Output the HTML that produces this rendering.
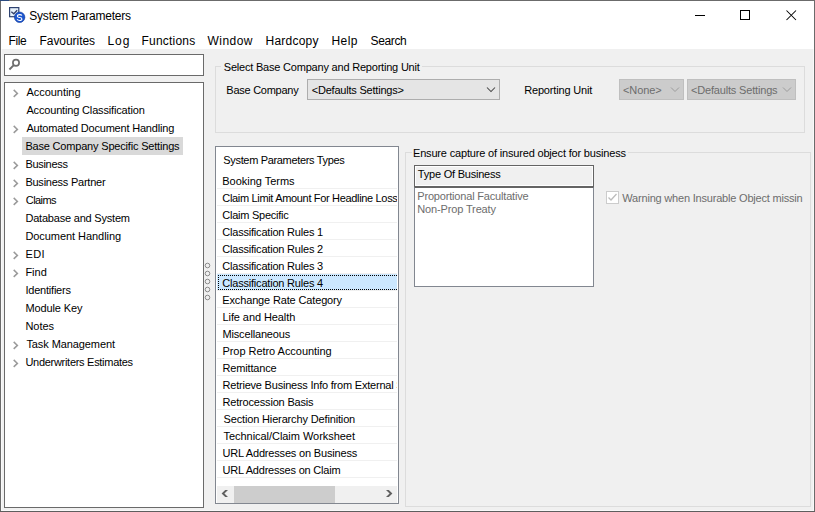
<!DOCTYPE html>
<html><head><meta charset="utf-8"><style>
html,body{margin:0;padding:0}
body{width:815px;height:512px;overflow:hidden;position:relative;background:#f0f0f0;font-family:"Liberation Sans",sans-serif}
.t{position:absolute;white-space:nowrap}
</style></head><body>
<div style="position:absolute;left:0px;top:0px;width:815px;height:49px;background:#fff"></div>
<div style="position:absolute;left:0px;top:0px;width:815px;height:1px;background:#6b6b6b"></div>
<div style="position:absolute;left:0px;top:0px;width:1px;height:512px;background:#6b6b6b"></div>
<div style="position:absolute;left:814px;top:0px;width:1px;height:512px;background:#6b6b6b"></div>
<div style="position:absolute;left:1px;top:49px;width:1px;height:462px;background:#f9f9f9"></div>
<div style="position:absolute;left:813px;top:49px;width:1px;height:462px;background:#f9f9f9"></div>
<div style="position:absolute;left:1px;top:510px;width:813px;height:1px;background:#f9f9f9"></div>
<div style="position:absolute;left:0px;top:511px;width:815px;height:1px;background:#5e5e5e"></div>
<div style="position:absolute;left:0px;top:0px;width:9px;height:1px;background:#2a4a80"></div>
<svg style="position:absolute;left:8px;top:6px" width="20" height="18" viewBox="0 0 20 18">
<rect x="1.6" y="1.6" width="9.2" height="9.1" fill="#e8f2fb" stroke="#2e4270" stroke-width="1.2"/>
<path d="M3.3 5.7 L5.8 7.8 L9.2 4.2" fill="none" stroke="#34406a" stroke-width="1.3"/>
<circle cx="11.65" cy="11.25" r="5.2" fill="#1b55cf" stroke="#183f99" stroke-width="0.7"/>
<path d="M14 9.5 C13.5 8.8 12.6 8.6 11.6 8.6 C10.4 8.6 9.4 9.2 9.4 10.2 C9.4 11.3 10.5 11.4 11.6 11.5 C12.8 11.6 13.9 11.9 13.9 12.9 C13.9 13.9 12.8 14.4 11.6 14.4 C10.5 14.4 9.6 14.1 9.1 13.3" fill="none" stroke="#fff" stroke-width="1.05"/>
</svg>
<div class="t" style="left:29.3px;top:8.84px;font-size:12px;line-height:14px;color:#000;letter-spacing:-0.225px;">System Parameters</div>
<div style="position:absolute;left:695px;top:15px;width:10px;height:1px;background:#000"></div>
<div style="position:absolute;left:740px;top:10px;width:10px;height:10px;border:1px solid #000;box-sizing:border-box"></div>
<svg style="position:absolute;left:786px;top:10px" width="11" height="11" viewBox="0 0 11 11">
<path d="M0.5 0.5 L10 10 M10 0.5 L0.5 10" stroke="#000" stroke-width="1.05"/></svg>
<div class="t" style="left:8.5px;top:33.84px;font-size:12px;line-height:14px;color:#000;letter-spacing:-0.35px;">File</div>
<div class="t" style="left:39.5px;top:33.84px;font-size:12px;line-height:14px;color:#000;letter-spacing:-0.05px;">Favourites</div>
<div class="t" style="left:107.5px;top:33.84px;font-size:12px;line-height:14px;color:#000;letter-spacing:0.95px;">Log</div>
<div class="t" style="left:141.5px;top:33.84px;font-size:12px;line-height:14px;color:#000;letter-spacing:0.2px;">Functions</div>
<div class="t" style="left:207.5px;top:33.84px;font-size:12px;line-height:14px;color:#000;letter-spacing:0.45px;">Window</div>
<div class="t" style="left:265.5px;top:33.84px;font-size:12px;line-height:14px;color:#000;letter-spacing:0.23px;">Hardcopy</div>
<div class="t" style="left:331.5px;top:33.84px;font-size:12px;line-height:14px;color:#000;letter-spacing:0.45px;">Help</div>
<div class="t" style="left:370.5px;top:33.84px;font-size:12px;line-height:14px;color:#000;letter-spacing:-0.35px;">Search</div>
<div style="position:absolute;left:4px;top:54px;width:200px;height:22px;background:#fff;border:1px solid #6a6a6a;box-sizing:border-box"></div>
<svg style="position:absolute;left:7px;top:57px" width="14" height="14" viewBox="0 0 14 14">
<circle cx="9" cy="5.8" r="3.1" fill="none" stroke="#6d6d6d" stroke-width="1.7"/>
<path d="M6.8 8.1 L2.4 12.5" stroke="#6d6d6d" stroke-width="1.9"/></svg>
<div style="position:absolute;left:4px;top:82px;width:200px;height:426px;background:#fff;border:1px solid #6a6a6a;box-sizing:border-box"></div>
<div style="position:absolute;left:22px;top:137px;width:161px;height:18px;background:#d9d9d9"></div>
<div class="t" style="left:26.4px;top:85.69px;font-size:11px;line-height:13px;color:#000;letter-spacing:-0.033px;">Accounting</div>
<svg style="position:absolute;left:12px;top:88px" width="8" height="11" viewBox="0 0 8 11"><path d="M1.7 1.9 L5.4 5.4 L1.7 8.9" fill="none" stroke="#9a9a9a" stroke-width="1.5"/></svg>
<div class="t" style="left:26.4px;top:103.69px;font-size:11px;line-height:13px;color:#000;letter-spacing:-0.163px;">Accounting Classification</div>
<div class="t" style="left:26.4px;top:121.69px;font-size:11px;line-height:13px;color:#000;letter-spacing:-0.192px;">Automated Document Handling</div>
<svg style="position:absolute;left:12px;top:124px" width="8" height="11" viewBox="0 0 8 11"><path d="M1.7 1.9 L5.4 5.4 L1.7 8.9" fill="none" stroke="#9a9a9a" stroke-width="1.5"/></svg>
<div class="t" style="left:25.4px;top:139.69px;font-size:11px;line-height:13px;color:#000;letter-spacing:-0.186px;">Base Company Specific Settings</div>
<div class="t" style="left:25.4px;top:157.69px;font-size:11px;line-height:13px;color:#000;letter-spacing:-0.3px;">Business</div>
<svg style="position:absolute;left:12px;top:160px" width="8" height="11" viewBox="0 0 8 11"><path d="M1.7 1.9 L5.4 5.4 L1.7 8.9" fill="none" stroke="#9a9a9a" stroke-width="1.5"/></svg>
<div class="t" style="left:25.4px;top:175.69px;font-size:11px;line-height:13px;color:#000;letter-spacing:-0.24px;">Business Partner</div>
<svg style="position:absolute;left:12px;top:178px" width="8" height="11" viewBox="0 0 8 11"><path d="M1.7 1.9 L5.4 5.4 L1.7 8.9" fill="none" stroke="#9a9a9a" stroke-width="1.5"/></svg>
<div class="t" style="left:25.8px;top:193.69px;font-size:11px;line-height:13px;color:#000;letter-spacing:-0.56px;">Claims</div>
<svg style="position:absolute;left:12px;top:196px" width="8" height="11" viewBox="0 0 8 11"><path d="M1.7 1.9 L5.4 5.4 L1.7 8.9" fill="none" stroke="#9a9a9a" stroke-width="1.5"/></svg>
<div class="t" style="left:25.4px;top:211.69px;font-size:11px;line-height:13px;color:#000;letter-spacing:-0.2px;">Database and System</div>
<div class="t" style="left:25.4px;top:229.69px;font-size:11px;line-height:13px;color:#000;letter-spacing:-0.056px;">Document Handling</div>
<div class="t" style="left:25.4px;top:247.69px;font-size:11px;line-height:13px;color:#000;letter-spacing:0.45px;">EDI</div>
<svg style="position:absolute;left:12px;top:250px" width="8" height="11" viewBox="0 0 8 11"><path d="M1.7 1.9 L5.4 5.4 L1.7 8.9" fill="none" stroke="#9a9a9a" stroke-width="1.5"/></svg>
<div class="t" style="left:25.4px;top:265.69px;font-size:11px;line-height:13px;color:#000;letter-spacing:0.0px;">Find</div>
<svg style="position:absolute;left:12px;top:268px" width="8" height="11" viewBox="0 0 8 11"><path d="M1.7 1.9 L5.4 5.4 L1.7 8.9" fill="none" stroke="#9a9a9a" stroke-width="1.5"/></svg>
<div class="t" style="left:25.4px;top:283.69px;font-size:11px;line-height:13px;color:#000;letter-spacing:-0.21px;">Identifiers</div>
<div class="t" style="left:25.4px;top:301.69px;font-size:11px;line-height:13px;color:#000;letter-spacing:-0.111px;">Module Key</div>
<div class="t" style="left:25.4px;top:319.69px;font-size:11px;line-height:13px;color:#000;letter-spacing:-0.025px;">Notes</div>
<div class="t" style="left:26.4px;top:337.69px;font-size:11px;line-height:13px;color:#000;letter-spacing:-0.086px;">Task Management</div>
<svg style="position:absolute;left:12px;top:340px" width="8" height="11" viewBox="0 0 8 11"><path d="M1.7 1.9 L5.4 5.4 L1.7 8.9" fill="none" stroke="#9a9a9a" stroke-width="1.5"/></svg>
<div class="t" style="left:25.4px;top:355.69px;font-size:11px;line-height:13px;color:#000;letter-spacing:-0.286px;">Underwriters Estimates</div>
<svg style="position:absolute;left:12px;top:358px" width="8" height="11" viewBox="0 0 8 11"><path d="M1.7 1.9 L5.4 5.4 L1.7 8.9" fill="none" stroke="#9a9a9a" stroke-width="1.5"/></svg>
<svg style="position:absolute;left:203px;top:260px" width="10" height="42" viewBox="0 0 10 42"><circle cx="4.5" cy="5.5" r="2.3" fill="none" stroke="#8a8a8a" stroke-width="1"/><circle cx="4.5" cy="13.5" r="2.3" fill="none" stroke="#8a8a8a" stroke-width="1"/><circle cx="4.5" cy="21.5" r="2.3" fill="none" stroke="#8a8a8a" stroke-width="1"/><circle cx="4.5" cy="29.5" r="2.3" fill="none" stroke="#8a8a8a" stroke-width="1"/><circle cx="4.5" cy="37.5" r="2.3" fill="none" stroke="#8a8a8a" stroke-width="1"/></svg>
<div style="position:absolute;left:215px;top:66px;width:590px;height:67px;border:1px solid #dcdcdc;box-sizing:border-box"></div>
<div style="position:absolute;left:221px;top:60px;width:201px;height:10px;background:#f0f0f0"></div>
<div class="t" style="left:223.8px;top:60.69px;font-size:11px;line-height:13px;color:#000;letter-spacing:-0.205px;">Select Base Company and Reporting Unit</div>
<div class="t" style="left:226.3px;top:83.69px;font-size:11px;line-height:13px;color:#000;letter-spacing:-0.255px;">Base Company</div>
<div style="position:absolute;left:307px;top:79px;width:193px;height:21px;background:#e5e5e5;border:1px solid #adadad;box-sizing:border-box"></div>
<div class="t" style="left:311.7px;top:83.69px;font-size:11px;line-height:13px;color:#000;letter-spacing:-0.206px;">&lt;Defaults Settings&gt;</div>
<svg style="position:absolute;left:486px;top:86px" width="10" height="7" viewBox="0 0 10 7"><path d="M1 1.5 L5 5.5 L9 1.5" fill="none" stroke="#444" stroke-width="1.05"/></svg>
<div class="t" style="left:524.2px;top:83.69px;font-size:11px;line-height:13px;color:#000;letter-spacing:-0.169px;">Reporting Unit</div>
<div style="position:absolute;left:619px;top:79px;width:65px;height:21px;background:#cccccc;border:1px solid #bfbfbf;box-sizing:border-box"></div>
<div class="t" style="left:623.0px;top:83.69px;font-size:11px;line-height:13px;color:#6d6d6d;letter-spacing:-0.08px;">&lt;None&gt;</div>
<svg style="position:absolute;left:670px;top:86px" width="10" height="7" viewBox="0 0 10 7"><path d="M1 1.5 L5 5.5 L9 1.5" fill="none" stroke="#9c9c9c" stroke-width="1"/></svg>
<div style="position:absolute;left:687px;top:79px;width:109px;height:21px;background:#cccccc;border:1px solid #bfbfbf;box-sizing:border-box"></div>
<div class="t" style="left:691.0px;top:83.69px;font-size:11px;line-height:13px;color:#6d6d6d;letter-spacing:-0.176px;">&lt;Defaults Settings</div>
<svg style="position:absolute;left:782px;top:86px" width="10" height="7" viewBox="0 0 10 7"><path d="M1 1.5 L5 5.5 L9 1.5" fill="none" stroke="#9c9c9c" stroke-width="1"/></svg>
<div style="position:absolute;left:215px;top:146px;width:184px;height:358px;background:#fff;border:1px solid #828790;box-sizing:border-box"></div>
<div class="t" style="left:223.3px;top:153.69px;font-size:11px;line-height:13px;color:#000;letter-spacing:-0.336px;">System Parameters Types</div>
<div style="position:absolute;left:216px;top:147px;width:181px;height:339px;overflow:hidden">
<div style="position:absolute;left:1px;top:41px;width:180px;height:1px;background:#f0f0f0"></div>
<div class="t" style="left:6.30px;top:27.69px;font-size:11px;line-height:13px;letter-spacing:-0.025px;white-space:nowrap">Booking Terms</div>
<div style="position:absolute;left:1px;top:58px;width:180px;height:1px;background:#f0f0f0"></div>
<div class="t" style="left:6.30px;top:44.69px;font-size:11px;line-height:13px;letter-spacing:-0.330px;white-space:nowrap">Claim Limit Amount For Headline Loss</div>
<div style="position:absolute;left:1px;top:75px;width:180px;height:1px;background:#f0f0f0"></div>
<div class="t" style="left:6.30px;top:61.69px;font-size:11px;line-height:13px;letter-spacing:-0.246px;white-space:nowrap">Claim Specific</div>
<div style="position:absolute;left:1px;top:92px;width:180px;height:1px;background:#f0f0f0"></div>
<div class="t" style="left:6.30px;top:78.69px;font-size:11px;line-height:13px;letter-spacing:-0.205px;white-space:nowrap">Classification Rules 1</div>
<div style="position:absolute;left:1px;top:109px;width:180px;height:1px;background:#f0f0f0"></div>
<div class="t" style="left:6.30px;top:95.69px;font-size:11px;line-height:13px;letter-spacing:-0.205px;white-space:nowrap">Classification Rules 2</div>
<div style="position:absolute;left:1px;top:126px;width:180px;height:1px;background:#f0f0f0"></div>
<div class="t" style="left:6.30px;top:112.69px;font-size:11px;line-height:13px;letter-spacing:-0.205px;white-space:nowrap">Classification Rules 3</div>
<div style="position:absolute;left:1px;top:127px;width:180px;height:16px;background:#cce8ff"></div>
<div style="position:absolute;left:2px;top:128px;width:179px;height:15px;border:1px dotted #000;border-right:none;box-sizing:border-box"></div>
<div style="position:absolute;left:1px;top:143px;width:180px;height:1px;background:#f0f0f0"></div>
<div class="t" style="left:6.30px;top:129.69px;font-size:11px;line-height:13px;letter-spacing:-0.205px;white-space:nowrap">Classification Rules 4</div>
<div style="position:absolute;left:1px;top:160px;width:180px;height:1px;background:#f0f0f0"></div>
<div class="t" style="left:6.30px;top:146.69px;font-size:11px;line-height:13px;letter-spacing:-0.148px;white-space:nowrap">Exchange Rate Category</div>
<div style="position:absolute;left:1px;top:177px;width:180px;height:1px;background:#f0f0f0"></div>
<div class="t" style="left:6.50px;top:163.69px;font-size:11px;line-height:13px;letter-spacing:-0.086px;white-space:nowrap">Life and Health</div>
<div style="position:absolute;left:1px;top:194px;width:180px;height:1px;background:#f0f0f0"></div>
<div class="t" style="left:6.50px;top:180.69px;font-size:11px;line-height:13px;letter-spacing:-0.167px;white-space:nowrap">Miscellaneous</div>
<div style="position:absolute;left:1px;top:211px;width:180px;height:1px;background:#f0f0f0"></div>
<div class="t" style="left:6.40px;top:197.69px;font-size:11px;line-height:13px;letter-spacing:-0.040px;white-space:nowrap">Prop Retro Accounting</div>
<div style="position:absolute;left:1px;top:228px;width:180px;height:1px;background:#f0f0f0"></div>
<div class="t" style="left:6.40px;top:214.69px;font-size:11px;line-height:13px;letter-spacing:-0.144px;white-space:nowrap">Remittance</div>
<div style="position:absolute;left:1px;top:245px;width:180px;height:1px;background:#f0f0f0"></div>
<div class="t" style="left:6.50px;top:231.69px;font-size:11px;line-height:13px;letter-spacing:-0.211px;white-space:nowrap">Retrieve Business Info from External System</div>
<div style="position:absolute;left:1px;top:262px;width:180px;height:1px;background:#f0f0f0"></div>
<div class="t" style="left:6.50px;top:248.69px;font-size:11px;line-height:13px;letter-spacing:-0.182px;white-space:nowrap">Retrocession Basis</div>
<div style="position:absolute;left:1px;top:279px;width:180px;height:1px;background:#f0f0f0"></div>
<div class="t" style="left:7.50px;top:265.69px;font-size:11px;line-height:13px;letter-spacing:-0.148px;white-space:nowrap">Section Hierarchy Definition</div>
<div style="position:absolute;left:1px;top:296px;width:180px;height:1px;background:#f0f0f0"></div>
<div class="t" style="left:7.50px;top:282.69px;font-size:11px;line-height:13px;letter-spacing:-0.042px;white-space:nowrap">Technical/Claim Worksheet</div>
<div style="position:absolute;left:1px;top:313px;width:180px;height:1px;background:#f0f0f0"></div>
<div class="t" style="left:6.50px;top:299.69px;font-size:11px;line-height:13px;letter-spacing:-0.179px;white-space:nowrap">URL Addresses on Business</div>
<div style="position:absolute;left:1px;top:330px;width:180px;height:1px;background:#f0f0f0"></div>
<div class="t" style="left:6.50px;top:316.69px;font-size:11px;line-height:13px;letter-spacing:-0.210px;white-space:nowrap">URL Addresses on Claim</div>
</div>
<div style="position:absolute;left:217px;top:486px;width:180px;height:17px;background:#f0f0f0"></div>
<div style="position:absolute;left:234px;top:486px;width:101px;height:17px;background:#cdcdcd"></div>
<svg style="position:absolute;left:0;top:0" width="815" height="512" viewBox="0 0 815 512"><path d="M228 490 L225.2 490 L221.6 493.5 L225.2 497 L228 497 L224.4 493.5 Z M386 490 L388.8 490 L392.4 493.5 L388.8 497 L386 497 L389.6 493.5 Z" fill="#606060"/></svg>
<div style="position:absolute;left:405px;top:152px;width:406px;height:355px;border:1px solid #dcdcdc;box-sizing:border-box"></div>
<div style="position:absolute;left:412px;top:146px;width:216px;height:10px;background:#f0f0f0"></div>
<div class="t" style="left:413.0px;top:146.69px;font-size:11px;line-height:13px;color:#000;letter-spacing:-0.175px;">Ensure capture of insured object for business</div>
<div style="position:absolute;left:414px;top:165px;width:180px;height:22px;background:#f0f0f0;border:1px solid #646464;box-sizing:border-box;box-shadow:inset 1px 1px 0 #fff, inset -1px -1px 0 #fff"></div>
<div class="t" style="left:417.8px;top:167.69px;font-size:11px;line-height:13px;color:#000;letter-spacing:-0.213px;">Type Of Business</div>
<div style="position:absolute;left:414px;top:187px;width:180px;height:100px;background:#fff;border:1px solid #828790;border-top:1px solid #646464;box-sizing:border-box"></div>
<div class="t" style="left:417.3px;top:189.69px;font-size:11px;line-height:13px;color:#6d6d6d;letter-spacing:-0.183px;">Proportional Facultative</div>
<div class="t" style="left:417.3px;top:202.69px;font-size:11px;line-height:13px;color:#6d6d6d;letter-spacing:-0.143px;">Non-Prop Treaty</div>
<div style="position:absolute;left:606px;top:191px;width:13px;height:13px;background:#fff;border:1px solid #cccccc;box-sizing:border-box"></div>
<svg style="position:absolute;left:606px;top:191px" width="13" height="13" viewBox="0 0 13 13"><path d="M2.5 6.5 L5 9 L10.5 3" fill="none" stroke="#bcbcbc" stroke-width="1.3"/></svg>
<div class="t" style="left:622.3px;top:191.69px;font-size:11px;line-height:13px;color:#6d6d6d;letter-spacing:-0.197px;">Warning when Insurable Object missin</div>
</body></html>
